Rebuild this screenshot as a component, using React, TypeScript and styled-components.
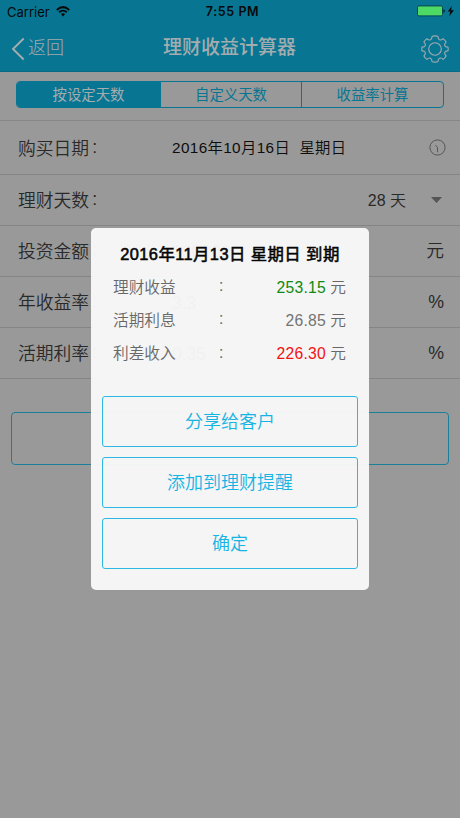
import React from "react";
import styled, { createGlobalStyle } from "styled-components";

const GlobalStyle = createGlobalStyle`
  * { box-sizing: border-box; }
  body {
    margin: 0;
    background: #999;
    font-family: "Liberation Sans", "Noto Sans CJK SC", sans-serif;
    font-weight: 350;
  }
  button { font: inherit; padding: 0; margin: 0; cursor: pointer; }
`;

const Screen = styled.div`
  position: relative;
  width: 460px;
  height: 818px;
  overflow: hidden;
  background: #999;
`;

const Header = styled.header`
  height: 72px;
  background: #087693;
  border-bottom: 1px solid #086a85;
`;

const StatusBar = styled.div`
  display: grid;
  grid-template-columns: 1fr auto 1fr;
  align-items: center;
  height: 24px;
  padding: 0 5px 0 7px;
  color: #06090a;
  font: 400 13px/24px Inter, sans-serif;
`;

const Carrier = styled.div`
  display: flex;
  align-items: center;
  gap: 6px;
  margin-top: -1px;
  letter-spacing: 0;
  svg { margin-top: -1px; }
`;

const Clock = styled.div`
  font-weight: 600;
  font-size: 12.5px;
  letter-spacing: 0.6px;
  padding: 0 0 0 3px;
`;

const Power = styled.div`
  display: flex;
  justify-content: flex-end;
  margin-top: -2px;
  svg { display: block; }
`;

const NavBar = styled.nav`
  display: grid;
  grid-template-columns: 80px 1fr 80px;
  align-items: center;
  height: 46px;
  padding: 0 11px;
  color: #a3acaf;
`;

const Back = styled.button`
  display: flex;
  align-items: center;
  gap: 3px;
  border: 0;
  background: none;
  color: inherit;
  font-size: 18px;
  font-weight: 300;
  line-height: 26px;
  svg { margin-top: 3px; }
  span { margin-top: 1px; }
`;

const Title = styled.h1`
  margin: 2px 1px 0 0;
  text-align: center;
  font-size: 19px;
  font-weight: 500;
  line-height: 28px;
`;

const Settings = styled.button`
  justify-self: end;
  border: 0;
  background: none;
  color: inherit;
  height: 28px;
  margin-top: 4px;
`;

const SegmentBar = styled.div`
  height: 49px;
  padding: 9px 16px 0;
  border-bottom: 1px solid #878787;
`;

const Segments = styled.div`
  display: grid;
  grid-template-columns: 143px 141px 1fr;
  height: 27px;
  border: 1px solid #087693;
  border-radius: 4px;
  overflow: hidden;
`;

const Segment = styled.button<{ $active?: boolean }>`
  border: 0;
  border-left: ${(p) => (p.$active ? "0" : "1px solid #087693")};
  background: ${(p) => (p.$active ? "#087693" : "transparent")};
  color: ${(p) => (p.$active ? "#a3acaf" : "#087693")};
  font-size: 14.4px;
  font-weight: 400;
  line-height: 25px;
  padding-top: 1px;
`;

const Row = styled.div<{ $height: number }>`
  display: grid;
  grid-template-columns: 154px 1fr auto;
  align-items: center;
  height: ${(p) => p.$height}px;
  padding: 2px 14px 0 18px;
  border-bottom: 1px solid #858585;
  color: #292929;
  font-size: 17.8px;
  line-height: 26px;
`;

const Label = styled.span`
  display: flex;
  white-space: nowrap;
  i { font-style: normal; margin: -2px 0 2px 3px; }
`;

const DateValue = styled.span`
  color: #0d0d0d;
  font-size: 15.3px;
  font-weight: 350;
  letter-spacing: 0.38px;
  white-space: pre;
  margin-top: -2px;
`;

const DaysValue = styled.span`
  justify-self: end;
  margin-right: 25px;
  font-size: 16px;
`;

const FieldValue = styled.span`
  font-size: 17.5px;
`;

const Unit = styled.span`
  padding-right: 2px;
  margin-top: -2px;
`;

const IconSlot = styled.span<{ $inset?: number }>`
  display: flex;
  margin-top: -3px;
  padding-right: ${(p) => p.$inset ?? 0}px;
`;

const Calculate = styled.button`
  display: block;
  width: 438px;
  height: 53px;
  margin: 33px 0 0 11px;
  border: 1.5px solid #1b7f9a;
  border-radius: 4px;
  background: transparent;
`;

const Dialog = styled.section`
  position: absolute;
  left: 91px;
  top: 228px;
  width: 278px;
  height: 362px;
  padding: 13px 11px 0;
  border-radius: 5px;
  background: rgba(248, 248, 248, 0.97);
`;

const DialogTitle = styled.h2`
  margin: 0 0 4px;
  color: #050505;
  text-align: center;
  font-size: 16.4px;
  font-weight: 400;
  letter-spacing: 0.42px;
  line-height: 26px;
  white-space: nowrap;
  -webkit-text-stroke: 0.55px #050505;
`;

const Result = styled.div`
  display: grid;
  grid-template-columns: 106px 1fr auto;
  align-items: center;
  height: 33.3px;
  padding: 0 12px 0 11px;
  color: #686868;
  font-size: 15.7px;
  line-height: 24px;
`;

const Colon = styled.span`
  margin-top: -3px;
`;

const Amount = styled.span<{ $color?: string }>`
  color: ${(p) => p.$color ?? "#737373"};
  letter-spacing: 0.25px;
`;

const Actions = styled.div`
  display: grid;
  gap: 10px;
  margin-top: 25px;
`;

const Action = styled.button`
  height: 51px;
  padding-top: 2px;
  border: 1px solid #2bb9e4;
  border-radius: 3px;
  background: transparent;
  color: #16b4e3;
  font-size: 18px;
  line-height: 26px;
`;

const WifiIcon = () => (
  <svg width="14" height="11" viewBox="0 0 14 11" fill="none" stroke="currentColor">
    <path d="M.8 3.9Q7-1.7 13.2 3.9" strokeWidth="2" />
    <path d="M3.1 6.3Q7 2.9 10.9 6.3" strokeWidth="1.8" />
    <path d="M4.9 8.1Q7 6.4 9.1 8.1L7 10.4Z" fill="currentColor" stroke="none" />
  </svg>
);

const BatteryIcon = () => (
  <svg width="38" height="12" viewBox="0 0 38 12">
    <rect x=".5" y=".9" width="25" height="10" rx="1.4" fill="#4cd964" stroke="#064655" />
    <path d="M26.4 4.2Q28 4.4 28 5.9T26.4 7.7Z" fill="#052a33" />
    <path d="M34.8 1L30.8 6.6H33.3L32.2 11.2L37 5.2H34.2Z" fill="#06090a" />
  </svg>
);

const BackIcon = () => (
  <svg width="14" height="24" viewBox="0 0 14 24" fill="none" stroke="currentColor" strokeWidth="1.9">
    <path d="M12.7 1.5L2 12L12.7 22.5" />
  </svg>
);

const GearIcon = () => (
  <svg width="28" height="28" viewBox="0 0 28 28" fill="none" stroke="currentColor" strokeWidth="1.1" strokeLinejoin="round">
    <path d="M11.1 1.2Q14 .6 16.9 1.2Q17 4.1 18.5 4.8Q20.1 5.5 22.1 3.6Q24 5 25.1 7.1Q23.1 9.1 23.7 10.6Q24.3 12.1 27 12.1Q27.4 14 27 15.9Q24.3 15.9 23.7 17.4Q23.1 18.9 25.1 20.9Q24 23 22.1 24.4Q20.1 22.5 18.5 23.2Q17 23.9 16.9 26.8Q14 27.4 11.1 26.8Q11 23.9 9.5 23.2Q7.9 22.5 5.9 24.4Q4 23 2.9 20.9Q4.9 18.9 4.3 17.4Q3.7 15.9 1 15.9Q.6 14 1 12.1Q3.7 12.1 4.3 10.6Q4.9 9.1 2.9 7.1Q4 5 5.9 3.6Q7.9 5.5 9.5 4.8Q11 4.1 11.1 1.2Z" />
    <circle cx="14" cy="14" r="6.3" />
  </svg>
);

const ClockIcon = () => (
  <svg width="17" height="17" viewBox="0 0 17 17" fill="none" stroke="#4e4e4e" strokeWidth=".9">
    <circle cx="8.5" cy="8.5" r="7.6" />
    <path d="M6.4 6.2L8.5 8.4V13.2" />
  </svg>
);

const ArrowIcon = () => (
  <svg width="11" height="6" viewBox="0 0 11 6">
    <path d="M0 0H11L5.5 6Z" fill="#555" />
  </svg>
);

const fields = [
  { label: "投资金额", value: "100000", unit: "元", height: 51 },
  { label: "年收益率", value: "3.3", unit: "%", height: 51 },
  { label: "活期利率", value: "0.35", unit: "%", height: 51 },
];

const results = [
  { label: "理财收益", amount: "253.15", color: "#108a10" },
  { label: "活期利息", amount: "26.85" },
  { label: "利差收入", amount: "226.30", color: "#f31212" },
];

export default function App() {
  return (
    <>
      <GlobalStyle />
      <Screen>
        <Header>
          <StatusBar>
            <Carrier>Carrier <WifiIcon /></Carrier>
            <Clock>7:55 PM</Clock>
            <Power><BatteryIcon /></Power>
          </StatusBar>
          <NavBar>
            <Back><BackIcon /><span>返回</span></Back>
            <Title>理财收益计算器</Title>
            <Settings aria-label="设置"><GearIcon /></Settings>
          </NavBar>
        </Header>
        <SegmentBar>
          <Segments>
            <Segment $active>按设定天数</Segment>
            <Segment>自定义天数</Segment>
            <Segment>收益率计算</Segment>
          </Segments>
        </SegmentBar>
        <Row $height={54}>
          <Label>购买日期<i>:</i></Label>
          <DateValue>{"2016年10月16日  星期日"}</DateValue>
          <IconSlot><ClockIcon /></IconSlot>
        </Row>
        <Row $height={51}>
          <Label>理财天数<i>:</i></Label>
          <DaysValue>28 天</DaysValue>
          <IconSlot $inset={4}><ArrowIcon /></IconSlot>
        </Row>
        {fields.map((f) => (
          <Row key={f.label} $height={f.height}>
            <Label>{f.label}<i>:</i></Label>
            <FieldValue>{f.value}</FieldValue>
            <Unit>{f.unit}</Unit>
          </Row>
        ))}
        <Calculate aria-label="计算" />
        <Dialog role="dialog">
          <DialogTitle>2016年11月13日 星期日 到期</DialogTitle>
          {results.map((r) => (
            <Result key={r.label}>
              <span>{r.label}</span>
              <Colon>:</Colon>
              <span><Amount $color={r.color}>{r.amount}</Amount> 元</span>
            </Result>
          ))}
          <Actions>
            <Action>分享给客户</Action>
            <Action>添加到理财提醒</Action>
            <Action>确定</Action>
          </Actions>
        </Dialog>
      </Screen>
    </>
  );
}
